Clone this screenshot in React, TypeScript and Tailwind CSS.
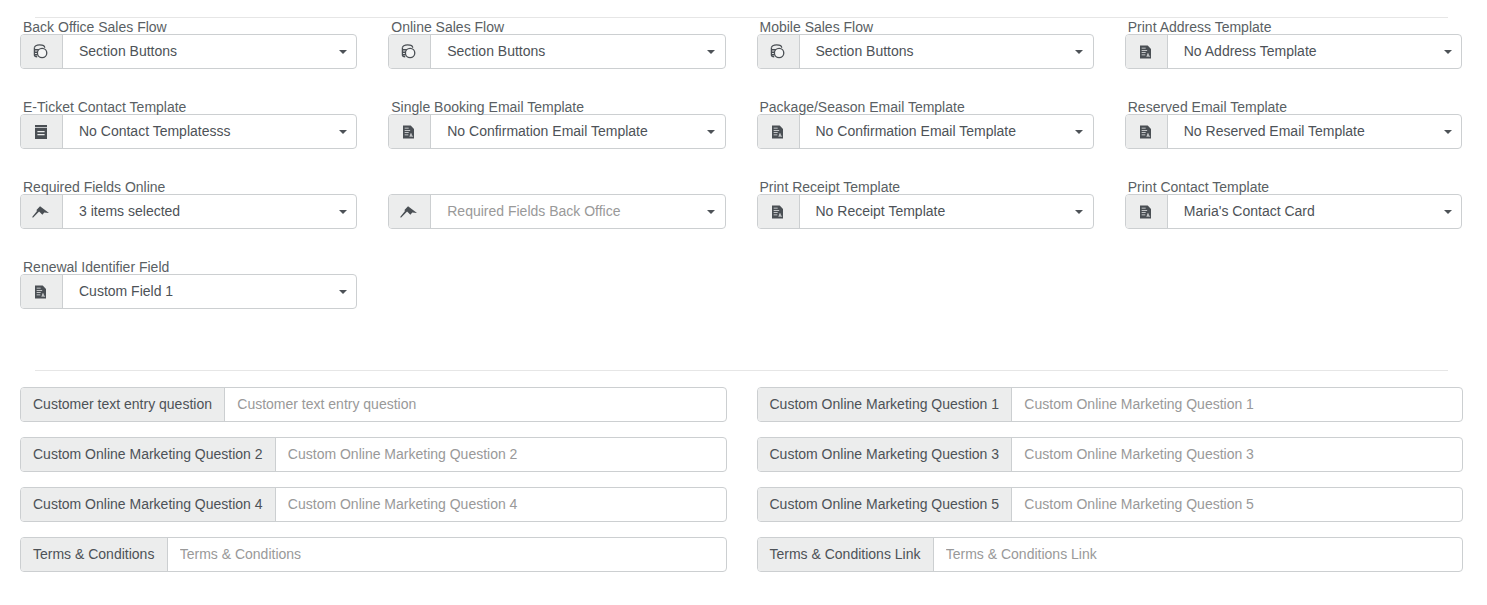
import React from "react";

type IconName = "coins" | "book" | "pin" | "doc";

const Icon = ({ name }: { name: IconName }) => {
  if (name === "coins") {
    return (
      <svg width="15" height="15" viewBox="0 0 16 16" fill="none" stroke="#4a4f54" strokeWidth="1.4">
        <path d="M1.5 4C1.5 2.2 3.6 1 7 1s5.5 1.2 5.5 3" />
        <path d="M1.5 4v7.6c0 1 1.2 1.8 3 2" />
        <path d="M1.5 6.2h5M1.5 8.8h3.4M1.5 11.4h3.2" strokeWidth="1.6" />
        <circle cx="9.7" cy="9.6" r="5" fill="#f4f5f5" />
      </svg>
    );
  }
  if (name === "book") {
    return (
      <svg width="12" height="14" viewBox="0 0 12 14" fill="#4a4f54">
        <path d="M0 0h12v14H0z" />
        <path d="M0 2h12v.8H0zM2.4 6h7.2v1.3H2.4zM2.4 9h7.2v1.3H2.4z" fill="#eceded" />
      </svg>
    );
  }
  if (name === "pin") {
    return (
      <svg width="17" height="12" viewBox="0 0 18 12" fill="#4a4f54">
        <path d="M8.5 0L18 7l-5-.5L11 9 7.5 5.5 1 12l-.8-.7L5.5 4.6l-1-.4z" />
      </svg>
    );
  }
  return (
    <svg width="11" height="14" viewBox="0 0 12 14" fill="#4a4f54">
      <path d="M0 0h8.4L12 3.6V14H0z" />
      <path d="M1.8 2.4h4.4v.9H1.8zM1.8 4.8h6v.9h-6zM1.8 7.2h4.4v.9H1.8zM1.8 9.6h4v.9h-4zM8 8.6h1.4v2.4H11v.8H7v-.8h1z" fill="#eceded" />
    </svg>
  );
};

const selects: { label: string; value: string; icon: IconName; muted?: boolean }[] = [
  { label: "Back Office Sales Flow", value: "Section Buttons", icon: "coins" },
  { label: "Online Sales Flow", value: "Section Buttons", icon: "coins" },
  { label: "Mobile Sales Flow", value: "Section Buttons", icon: "coins" },
  { label: "Print Address Template", value: "No Address Template", icon: "doc" },
  { label: "E-Ticket Contact Template", value: "No Contact Templatesss", icon: "book" },
  { label: "Single Booking Email Template", value: "No Confirmation Email Template", icon: "doc" },
  { label: "Package/Season Email Template", value: "No Confirmation Email Template", icon: "doc" },
  { label: "Reserved Email Template", value: "No Reserved Email Template", icon: "doc" },
  { label: "Required Fields Online", value: "3 items selected", icon: "pin" },
  { label: "", value: "Required Fields Back Office", icon: "pin", muted: true },
  { label: "Print Receipt Template", value: "No Receipt Template", icon: "doc" },
  { label: "Print Contact Template", value: "Maria's Contact Card", icon: "doc" },
  { label: "Renewal Identifier Field", value: "Custom Field 1", icon: "doc" },
];

const questions = [
  "Customer text entry question",
  "Custom Online Marketing Question 1",
  "Custom Online Marketing Question 2",
  "Custom Online Marketing Question 3",
  "Custom Online Marketing Question 4",
  "Custom Online Marketing Question 5",
  "Terms & Conditions",
  "Terms & Conditions Link",
];

const App = () => {
  return (
    <div className="min-h-[605px] bg-white pt-[17px] pb-[33px] pl-[20px] pr-[24px] font-['Liberation_Sans',Arial,sans-serif] text-[14px] text-[#4d5257]">
      <hr className="mx-[15px] mb-[2px] border-t border-[#e6e6e6]" />

      <div className="mr-[1px] grid grid-cols-4 gap-x-[31px] gap-y-[31px]">
        {selects.map((s, ind) => (
          <div key={ind}>
            <div className="h-[14px] pl-[3px] leading-[14px] text-[#5a5f64]">{s.label}</div>
            <div className="flex h-[35px] rounded-[4px] border border-[#cccfd1]">
              <div className="flex w-[42px] shrink-0 items-center justify-center rounded-l-[3px] border-r border-[#cccfd1] bg-[#eceded] pr-[2px]">
                <Icon name={s.icon} />
              </div>
              <div className="flex min-w-0 flex-1 items-center justify-between pl-[16px] pr-[9.5px]">
                <span className={s.muted ? "text-[#999999]" : "text-[#4d5257]"}>{s.value}</span>
                <span className="h-0 w-0 border-x-[4px] border-t-[4px] border-x-transparent border-t-[#4d5257]" />
              </div>
            </div>
          </div>
        ))}
      </div>

      <hr className="mx-[15px] mt-[61px] mb-[16px] border-t border-[#e6e6e6]" />

      <div className="grid grid-cols-2 gap-x-[30px] gap-y-[15px]">
        {questions.map((q) => (
          <div key={q} className="flex h-[35px] rounded-[4px] border border-[#cccfd1]">
            <div className="flex shrink-0 items-center rounded-l-[3px] border-r border-[#cccfd1] bg-[#eceded] pl-[12px] pr-[12.3px] whitespace-nowrap">
              {q}
            </div>
            <input
              placeholder={q}
              className="min-w-0 flex-1 rounded-r-[3px] px-[12px] outline-none placeholder:text-[#999999]"
            />
          </div>
        ))}
      </div>
    </div>
  );
};

export default App;
